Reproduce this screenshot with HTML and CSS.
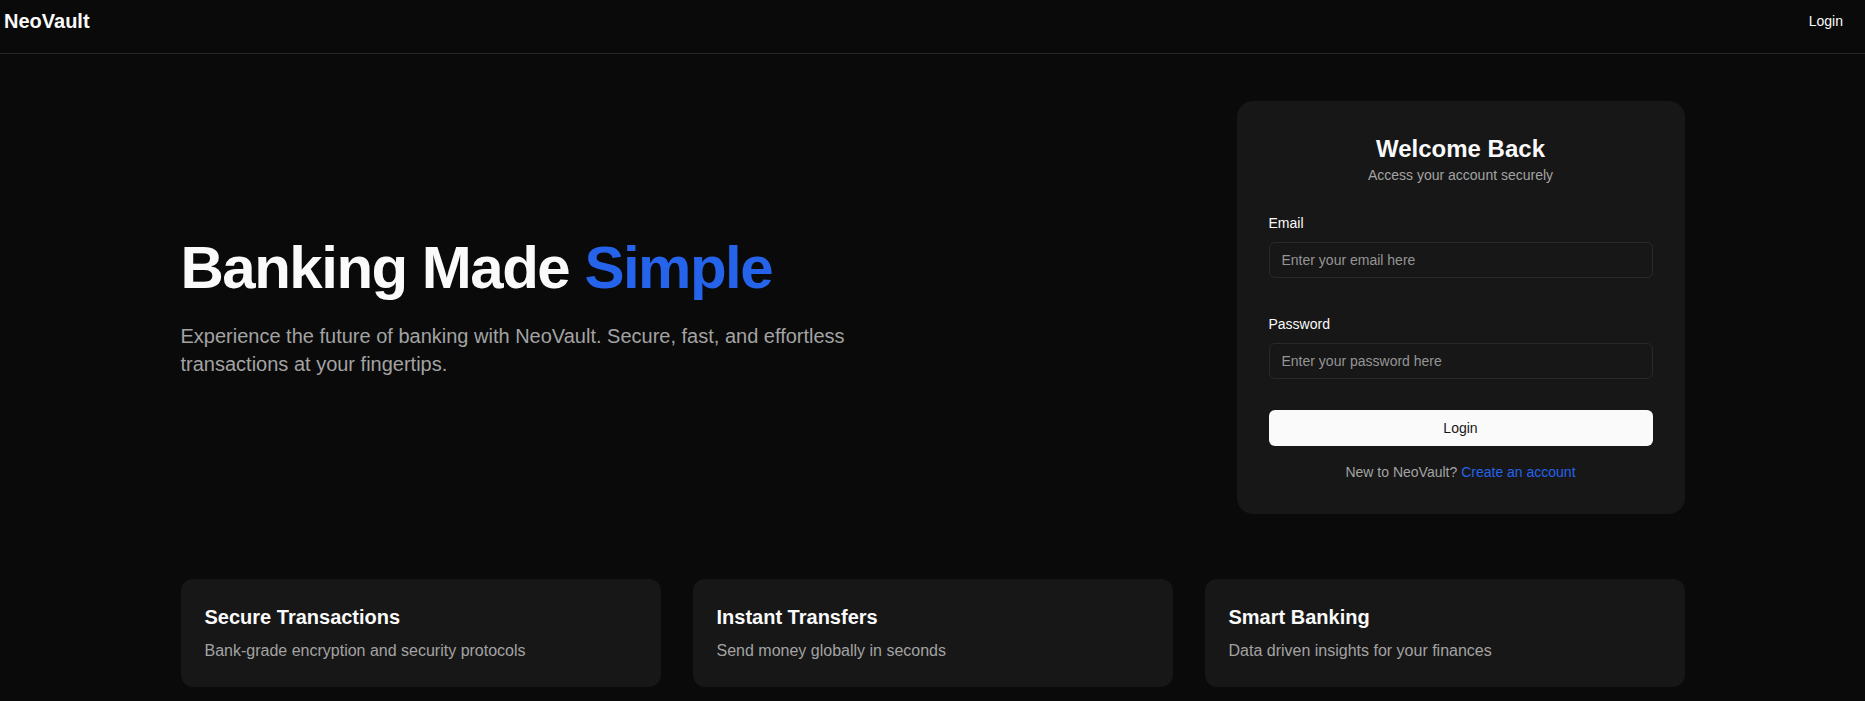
FILE: index.html
```html
<!DOCTYPE html>
<html>
<head>
  <meta charset="UTF-8">
  <title>NeoVault</title>
  <link rel="stylesheet" href="styles.css">
</head>
<body>

<!-- Top bar -->
<div class="topbar">
  <div class="brand">NeoVault</div>
  <a class="topbar-login" href="#">Login</a>
</div>

<div class="container">

  <!-- Hero -->
  <div class="hero">
    <div class="hero-text">
      <h1>Banking Made <span class="accent">Simple</span></h1>
      <p>Experience the future of banking with NeoVault. Secure, fast, and effortless transactions at your fingertips.</p>
    </div>

    <div class="login-card">
      <div class="login-head">
        <h2>Welcome Back</h2>
        <p>Access your account securely</p>
      </div>

      <div class="field">
        <label for="email">Email</label>
        <input id="email" type="email" placeholder="Enter your email here">
      </div>

      <div class="field field-last">
        <label for="password">Password</label>
        <input id="password" type="password" placeholder="Enter your password here">
      </div>

      <button class="login-btn">Login</button>

      <p class="signup">New to NeoVault? <a href="#">Create an account</a></p>
    </div>
  </div>

  <!-- Features -->
  <div class="features">
    <div class="feature">
      <h3>Secure Transactions</h3>
      <p>Bank-grade encryption and security protocols</p>
    </div>
    <div class="feature">
      <h3>Instant Transfers</h3>
      <p>Send money globally in seconds</p>
    </div>
    <div class="feature">
      <h3>Smart Banking</h3>
      <p>Data driven insights for your finances</p>
    </div>
  </div>

</div>

</body>
</html>
```

FILE: styles.css
```css
* {
  box-sizing: border-box;
}

body {
  font-family: "Liberation Sans", Arial, sans-serif;
  margin: 0;
  padding: 0;
  background-color: #0a0a0a;
  color: #fafafa;
}

/* Top bar */
.topbar {
  display: flex;
  align-items: center;
  justify-content: space-between;
  padding: 7px 22px 18px 4px;
  border-bottom: 1px solid #262626;
}

.brand {
  font-size: 20px;
  line-height: 28px;
  font-weight: bold;
}

.topbar-login {
  color: #fafafa;
  text-decoration: none;
  font-size: 14px;
  line-height: 20px;
}

.container {
  max-width: 1536px;
  margin: 0 auto;
  padding: 0 16px;
}

/* Hero */
.hero {
  display: flex;
  align-items: center;
  justify-content: space-between;
  padding: 47px 0 65px;
}

.hero-text {
  max-width: 672px;
}

.hero-text h1 {
  margin: 0 0 24px;
  font-size: 60px;
  line-height: 60px;
  font-weight: bold;
  letter-spacing: -0.025em;
}

.accent {
  color: #2563eb;
}

.hero-text p {
  margin: 0;
  font-size: 20px;
  line-height: 28px;
  color: #a3a3a3;
}

/* Login card */
.login-card {
  width: 448px;
  background-color: #171717;
  border-radius: 16px;
  padding: 32px;
}

.login-head {
  text-align: center;
  margin-bottom: 28px;
}

.login-head h2 {
  margin: 0;
  font-size: 24px;
  line-height: 32px;
}

.login-head p {
  margin: 0;
  font-size: 14px;
  line-height: 20px;
  color: #a3a3a3;
}

.field {
  margin-bottom: 36px;
}

.field-last {
  margin-bottom: 31px;
}

.field label {
  display: block;
  font-size: 14px;
  line-height: 20px;
  margin-bottom: 9px;
}

.field input {
  display: block;
  width: 100%;
  height: 36px;
  padding: 0 12px;
  background-color: #171717;
  border: 1px solid #292929;
  border-radius: 6px;
  color: #fafafa;
  font-family: inherit;
  font-size: 14px;
}

.field input::placeholder {
  color: #959595;
}

.login-btn {
  display: block;
  width: 100%;
  height: 36px;
  border: none;
  border-radius: 6px;
  background-color: #fafafa;
  color: #171717;
  font-family: inherit;
  font-size: 14px;
  cursor: pointer;
}

.signup {
  margin: 16px 0 0;
  text-align: center;
  font-size: 14px;
  line-height: 20px;
  color: #a3a3a3;
}

.signup a {
  color: #2563eb;
  text-decoration: none;
}

/* Feature cards */
.features {
  display: grid;
  grid-template-columns: repeat(3, 1fr);
  gap: 32px;
}

.feature {
  background-color: #171717;
  border-radius: 12px;
  padding: 24px;
}

.feature h3 {
  margin: 0 0 8px;
  font-size: 20px;
  line-height: 28px;
}

.feature p {
  margin: 0;
  font-size: 16px;
  line-height: 24px;
  color: #a3a3a3;
}
```
